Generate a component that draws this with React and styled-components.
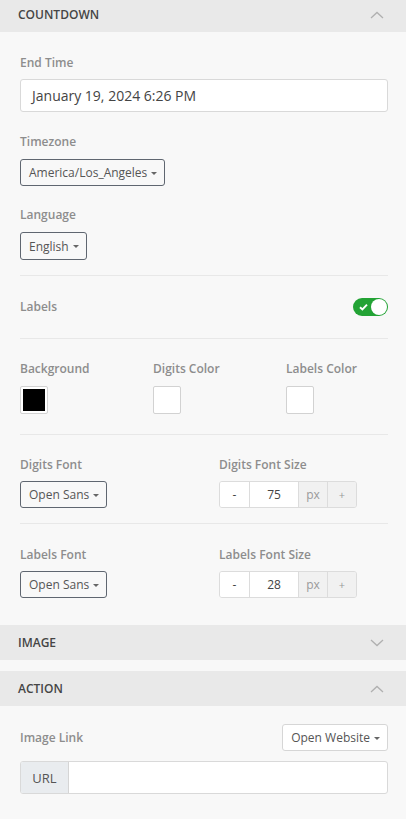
import styled, { createGlobalStyle } from "styled-components"

const Global = createGlobalStyle`
    html, body { margin: 0; padding: 0; background: #f8f8f8; }
    body { font-family: "Open Sans", "Liberation Sans", sans-serif; }
    * { box-sizing: border-box; }
`

const Panel = styled.div`
    width: 406px;
    background: #f8f8f8;
    display: flex;
    flex-direction: column;
`

const Header = styled.div`
    height: ${props => props.first ? 32 : 35}px;
    padding: 0 18px;
    padding-bottom: ${props => props.first ? 3 : 0}px;
    background: #e9e9e9;
    display: flex;
    align-items: center;
    justify-content: space-between;
    font-size: 12px;
    font-weight: 600;
    color: #454545;
    text-transform: uppercase;
    margin-top: ${props => props.gap ? 11 : 0}px;
`

const Chevron = ({ up }) => (
    <svg width="14" height="8" viewBox="0 0 14 8" style={{ marginRight: 4 }}>
        <path d={up ? "M1 7 L7 1.5 L13 7" : "M1 1 L7 6.5 L13 1"} fill="none" stroke="#b0b0b0" strokeWidth="1.3" />
    </svg>
)

const Body = styled.div`
    padding: ${props => props.pad || "20px 18px 26px 20px"};
    display: flex;
    flex-direction: column;
`

const Field = styled.div`
    display: flex;
    flex-direction: column;
    margin-bottom: ${props => props.mb || 0}px;
`

const Label = styled.div`
    font-size: 12px;
    font-weight: 600;
    color: #8d8d8d;
    line-height: 16px;
    margin-bottom: ${props => props.mb ?? 9}px;
`

const TextInput = styled.div`
    height: 33px;
    background: #fff;
    border: 1px solid #d9d9d9;
    border-radius: 3px;
    padding: 0 11px;
    display: flex;
    align-items: center;
    font-size: 14px;
    color: #444;
`

const Dropdown = styled.div`
    align-self: flex-start;
    height: ${props => props.h || 27}px;
    padding: 0 7px 0 8px;
    border: 1px solid ${props => props.light ? "#d6d6d6" : "#5f6670"};
    background: ${props => props.light ? "#fff" : "transparent"};
    border-radius: 3px;
    display: flex;
    align-items: center;
    gap: 4px;
    font-size: 12px;
    color: #555;
    &::after {
        content: "";
        border-left: 3px solid transparent;
        border-right: 3px solid transparent;
        border-top: 3px solid #666;
        margin-top: 1px;
    }
`

const Divider = styled.div`
    height: 1px;
    background: #e8e8e8;
    margin: ${props => props.m || "15px 0"};
`

const Row = styled.div`
    display: flex;
    align-items: center;
    justify-content: space-between;
`

const Toggle = styled.div`
    width: 35px;
    height: 18px;
    border-radius: 9px;
    background: #23a335;
    display: flex;
    align-items: center;
    justify-content: space-between;
    padding: 0 1px 0 6px;
    &::after {
        content: "";
        width: 16px;
        height: 16px;
        border-radius: 50%;
        background: #fff;
    }
`

const Grid = styled.div`
    display: grid;
    grid-template-columns: ${props => props.cols};
`

const Swatch = styled.div`
    width: 28px;
    height: 28px;
    border: 1px solid #d2d2d2;
    border-radius: 2px;
    padding: 2px;
    background: #fff;
    &::after {
        content: "";
        display: block;
        width: 100%;
        height: 100%;
        background: ${props => props.color};
    }
`

const Stepper = styled.div`
    align-self: flex-start;
    display: flex;
    height: 27px;
    border: 1px solid #dcdcdc;
    border-radius: 3px;
    overflow: hidden;
`

const Cell = styled.div`
    width: ${props => props.w}px;
    display: flex;
    align-items: center;
    justify-content: center;
    font-size: ${props => props.small ? 11 : 12}px;
    color: ${props => props.dim ? "#9a9a9a" : "#444"};
    background: ${props => props.grey ? "#f1f1f1" : "#fff"};
    & + & { border-left: 1px solid #dcdcdc; }
`

const InputGroup = styled.div`
    display: flex;
    height: 33px;
    margin-top: 10px;
    border: 1px solid #d9d9d9;
    border-radius: 3px;
    overflow: hidden;
    background: #fff;
`

const Addon = styled.div`
    width: 48px;
    background: #e9ecef;
    border-right: 1px solid #d5d5d5;
    display: flex;
    align-items: center;
    justify-content: center;
    font-size: 13px;
    color: #555;
`

const Check = () => (
    <svg width="9" height="8" viewBox="0 0 9 8">
        <path d="M1 4.2 L3.4 6.4 L8 1.6" fill="none" stroke="#fff" strokeWidth="1.9" />
    </svg>
)

const FontRow = ({ font, sizeLabel, size }) => (
    <Grid cols="199px 1fr">
        <Field>
            <Label mb={8}>{font}</Label>
            <Dropdown>Open Sans</Dropdown>
        </Field>
        <Field>
            <Label mb={8}>{sizeLabel}</Label>
            <Stepper>
                <Cell w={29}>-</Cell>
                <Cell w={49}>{size}</Cell>
                <Cell w={29} grey dim>px</Cell>
                <Cell w={29} grey dim small>+</Cell>
            </Stepper>
        </Field>
    </Grid>
)

export default function App() {
    return (
        <Panel>
            <Global />
            <Header first>Countdown<Chevron up /></Header>
            <Body pad="23px 18px 27px 20px">
                <Field mb={22}>
                    <Label mb={8}>End Time</Label>
                    <TextInput>January 19, 2024 6:26 PM</TextInput>
                </Field>
                <Field mb={21}>
                    <Label mb={9}>Timezone</Label>
                    <Dropdown>America/Los_Angeles</Dropdown>
                </Field>
                <Field>
                    <Label mb={9}>Language</Label>
                    <Dropdown h={28}>English</Dropdown>
                </Field>
                <Divider m="15px 0 22px" />
                <Row>
                    <Label mb={0}>Labels</Label>
                    <Toggle><Check /></Toggle>
                </Row>
                <Divider m="22px 0 22px" />
                <Grid cols="133px 133px 1fr">
                    <Field>
                        <Label mb={9}>Background</Label>
                        <Swatch color="#000" />
                    </Field>
                    <Field>
                        <Label mb={9}>Digits Color</Label>
                        <Swatch color="#fff" />
                    </Field>
                    <Field>
                        <Label mb={9}>Labels Color</Label>
                        <Swatch color="#fff" />
                    </Field>
                </Grid>
                <Divider m="20px 0 22px" />
                <FontRow font="Digits Font" sizeLabel="Digits Font Size" size="75" />
                <Divider m="15px 0 23px" />
                <FontRow font="Labels Font" sizeLabel="Labels Font Size" size="28" />
            </Body>
            <Header>Image<Chevron /></Header>
            <Header gap>Action<Chevron up /></Header>
            <Body pad="18px 18px 26px 20px">
                <Row>
                    <Label mb={0}>Image Link</Label>
                    <Dropdown light>Open Website</Dropdown>
                </Row>
                <InputGroup>
                    <Addon>URL</Addon>
                </InputGroup>
            </Body>
        </Panel>
    )
}
